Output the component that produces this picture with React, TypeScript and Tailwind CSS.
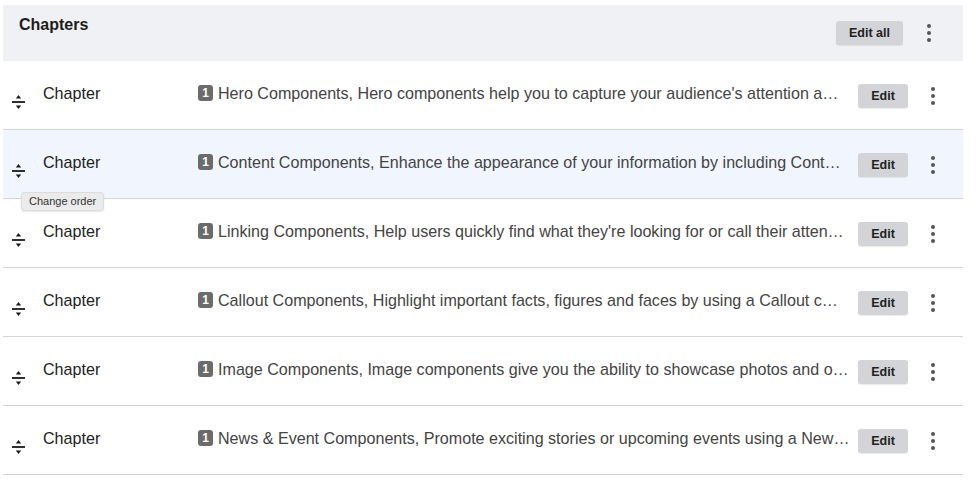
import React from "react";

const rows = [
  "Hero Components, Hero components help you to capture your audience's attention a…",
  "Content Components, Enhance the appearance of your information by including Cont…",
  "Linking Components, Help users quickly find what they're looking for or call their atten…",
  "Callout Components, Highlight important facts, figures and faces by using a Callout c…",
  "Image Components, Image components give you the ability to showcase photos and o…",
  "News & Event Components, Promote exciting stories or upcoming events using a New…",
];

function DragIcon() {
  return (
    <svg width="13" height="16" viewBox="0 0 13 16" className="text-[#1a1a1a]">
      <path d="M6.5 1 L9.2 4.6 L3.8 4.6 Z" fill="currentColor" />
      <rect x="0" y="7.1" width="13" height="1.8" fill="currentColor" />
      <path d="M3.8 11.4 L9.2 11.4 L6.5 15 Z" fill="currentColor" />
    </svg>
  );
}

function Kebab() {
  return (
    <div className="flex flex-col items-center gap-[3px]">
      <span className="block w-[4px] h-[4px] rounded-full bg-[#555]" />
      <span className="block w-[4px] h-[4px] rounded-full bg-[#555]" />
      <span className="block w-[4px] h-[4px] rounded-full bg-[#555]" />
    </div>
  );
}

export default function App() {
  return (
    <div
      className="w-[977px] h-[480px] bg-white pt-[5px] pl-[3px] overflow-hidden"
      style={{ fontFamily: "'Liberation Sans', Arial, sans-serif" }}
    >
      <div className="w-[960px]">
        <div className="h-[56px] bg-[#f0f1f5] flex">
          <div className="pl-[16px] pt-[8px] text-[16px] font-bold text-[#1c1c1c] flex-1">
            Chapters
          </div>
          <div className="flex items-start pt-[16px] pr-[8px]">
            <button className="w-[67px] h-[24px] rounded-[3px] bg-[#d3d4d8] text-[12.5px] font-bold text-[#222] shadow-[0_1px_1px_rgba(0,0,0,0.08)]">
              Edit all
            </button>
            <div className="w-[52px] flex justify-center pt-[3px]">
              <Kebab />
            </div>
          </div>
        </div>
        {rows.map((r, i) => (
          <div
            key={i}
            className={`relative h-[69px] border-b border-[#d4d4d4] flex ${
              i === 1 ? "bg-[#f1f6fe]" : "bg-white"
            }`}
          >
            <div className="w-[40px] flex justify-start pl-[9px] pt-[33px]">
              <DragIcon />
            </div>
            <div className="w-[155px] pt-[21px] text-[16.1px] text-[#222] leading-[22px]">
              Chapter
            </div>
            <div className="w-[655px] pt-[21px] flex items-start leading-[22px] text-[16.1px] text-[#444]">
              <span className="mt-[3px] shrink-0 w-[15px] h-[16px] rounded-[3px] bg-[#6b6b6b] text-white text-[12px] font-bold leading-[16px] text-center">
                1
              </span>
              <span className="ml-[5px] whitespace-nowrap">{r}</span>
            </div>
            <div className="pt-[22px] pl-[5px]">
              <button className="w-[50px] h-[24px] rounded-[3px] bg-[#d3d4d8] text-[12.5px] font-bold text-[#222] shadow-[0_1px_1px_rgba(0,0,0,0.08)]">
                Edit
              </button>
            </div>
            <div className="w-[50px] flex justify-center pt-[26px]">
              <Kebab />
            </div>
            {i === 1 && (
              <div className="absolute left-[18px] top-[62px] z-10 px-[7px] h-[19px] flex items-center rounded-[4px] bg-[#ebebeb] border border-[#dcdcdc] text-[11px] text-[#333] shadow-[0_1px_2px_rgba(0,0,0,0.1)]">
                Change order
              </div>
            )}
          </div>
        ))}
      </div>
    </div>
  );
}
